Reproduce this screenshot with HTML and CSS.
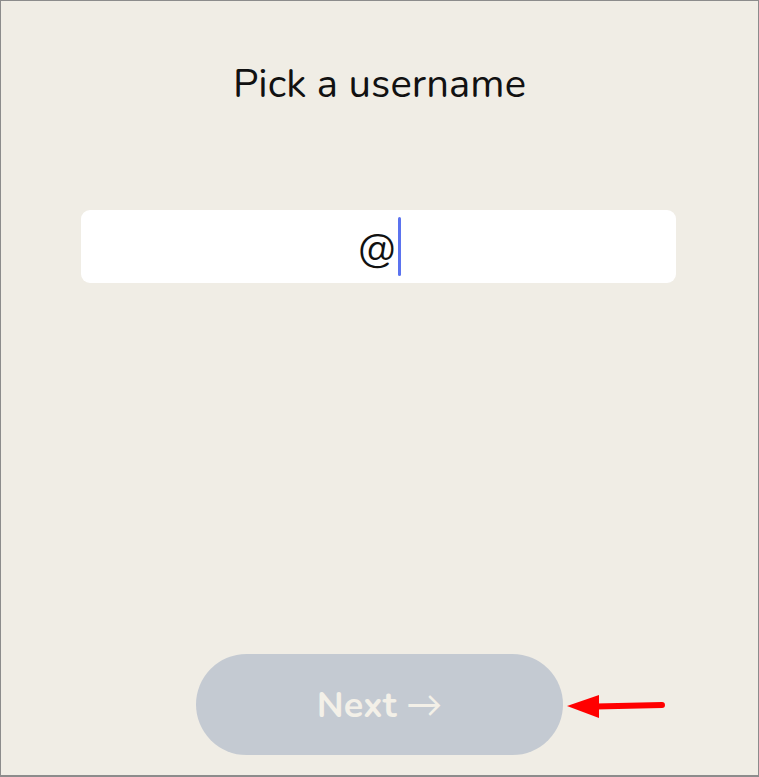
FILE: index.html
```html
<!DOCTYPE html>
<html lang="en">
<head>
<meta charset="utf-8">
<title>Pick a username</title>
<link rel="stylesheet" href="styles.css">
</head>
<body>
<div class="frame">
  <h1 class="title">Pick a username</h1>
  <div class="field">
    <span class="at">@</span><span class="caret"></span>
  </div>
  <div class="actions">
    <button class="next" type="button">Next <span class="arrow">→</span></button>
    <svg class="pointer" width="100" height="26" viewBox="0 0 100 26">
      <path d="M1 11 L33 0 L33 23 Z" fill="#ff0000"/>
      <line x1="30" y1="11.5" x2="96" y2="10" stroke="#ff0000" stroke-width="6" stroke-linecap="round"/>
    </svg>
  </div>
</div>
</body>
</html>
```
FILE: styles.css
```css
html, body {
  margin: 0;
  padding: 0;
}
body {
  font-family: "Nunito", "Lato", "Open Sans", sans-serif;
}
.frame {
  box-sizing: border-box;
  width: 759px;
  height: 777px;
  border: 1px solid #8c8c8c;
  border-bottom-width: 2px;
  background: #f0ede5;
  display: flex;
  flex-direction: column;
  align-items: center;
}
.title {
  margin: 58px 0 0;
  font-size: 40px;
  font-weight: 400;
  color: #111;
  line-height: 50px;
  letter-spacing: 0.1px;
}
.field {
  margin-top: 101px;
  width: 595px;
  height: 73px;
  background: #fff;
  border-radius: 9px;
  display: flex;
  align-items: center;
  justify-content: center;
  margin-right: 2px;
}
.at {
  font-size: 40px;
  color: #111;
  line-height: 1;
  margin-top: 4px;
  margin-left: 2px;
}
.caret {
  width: 3px;
  height: 59px;
  background: #5b73ef;
  border-radius: 2px;
  margin-left: 2px;
}
.actions {
  margin-top: auto;
  margin-bottom: 20px;
  position: relative;
}
.next {
  width: 367px;
  height: 101px;
  border: none;
  border-radius: 51px;
  background: #c4cad2;
  color: #f3f0e8;
  font-family: inherit;
  font-size: 36px;
  font-weight: 700;
  padding: 2px 0 0;
  cursor: pointer;
}
.arrow {
  font-weight: 400;
}
.pointer {
  position: absolute;
  left: 370px;
  top: 41px;
}
```
